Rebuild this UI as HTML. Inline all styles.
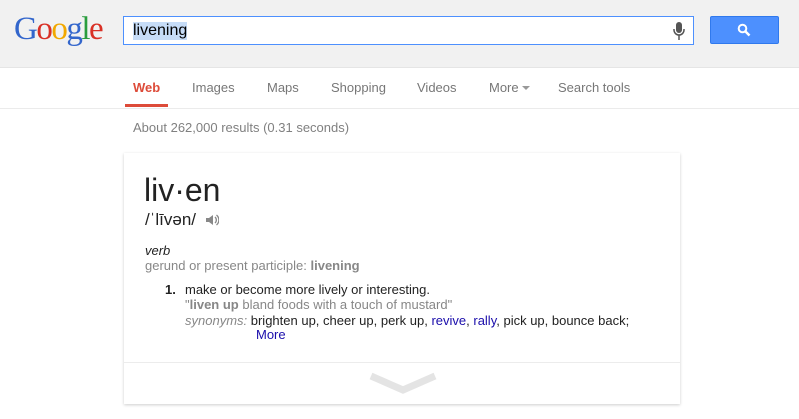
<!DOCTYPE html><html><head><style>
body{margin:0;width:799px;height:419px;overflow:hidden;background:#fff;font-family:"Liberation Sans",Arial,sans-serif;position:relative}
.a{position:absolute;white-space:nowrap}
</style></head><body>
<div class="a" style="left:0;top:0;width:799px;height:67px;background:#f1f1f1;border-bottom:1px solid #e5e5e5"></div>
<div class="a" style="left:14px;top:11px;font-family:'Liberation Serif',serif;font-size:33px;letter-spacing:-1.5px"><span style="color:#3366cc">G</span><span style="color:#d93025">o</span><span style="color:#f1a800">o</span><span style="color:#3366cc">g</span><span style="color:#2a9d3e">l</span><span style="color:#d93025">e</span></div>
<div class="a" style="left:123px;top:16px;width:569px;height:27px;background:#fff;border:1px solid #4d90fe;"></div>
<div class="a" style="left:133px;top:22px;font-size:16px;color:#000;background:#c6dcf7;line-height:18px">livening</div>
<svg class="a" style="left:672px;top:21px" width="14" height="20" viewBox="0 0 14 20"><rect x="4" y="1" width="6" height="11" rx="3" fill="#555"/><path d="M2 8v1a5 5 0 0 0 10 0V8" stroke="#555" stroke-width="1.5" fill="none"/><path d="M7 14v5" stroke="#555" stroke-width="1.5"/></svg>
<div class="a" style="left:710px;top:16px;width:69px;height:28px;background:#4d90fe;border:1px solid #3079ed;box-sizing:border-box;border-radius:2px"></div>
<svg class="a" style="left:737px;top:23px" width="14" height="14" viewBox="0 0 14 14"><circle cx="5.5" cy="5.5" r="3.8" stroke="#fff" stroke-width="2" fill="none"/><path d="M8.5 8.5l4 4" stroke="#fff" stroke-width="2.5"/></svg>
<div class="a" style="left:0;top:108px;width:799px;height:1px;background:#ebebeb"></div>
<div class="a" style="top:80px;left:133px;font-size:13px;color:#dd4b39;font-weight:bold">Web</div>
<div class="a" style="left:125px;top:104px;width:43px;height:3px;background:#dd4b39"></div>
<div class="a" style="top:80px;left:192px;font-size:13px;color:#777">Images</div>
<div class="a" style="top:80px;left:267px;font-size:13px;color:#777">Maps</div>
<div class="a" style="top:80px;left:331px;font-size:13px;color:#777">Shopping</div>
<div class="a" style="top:80px;left:417px;font-size:13px;color:#777">Videos</div>
<div class="a" style="top:80px;left:489px;font-size:13px;color:#777">More</div>
<div class="a" style="left:522px;top:86px;border-left:4px solid transparent;border-right:4px solid transparent;border-top:4px solid #999"></div>
<div class="a" style="top:80px;left:558px;font-size:13px;color:#777">Search tools</div>
<div class="a" style="top:120px;left:133px;font-size:13px;color:#808080">About 262,000 results (0.31 seconds)</div>
<div class="a" style="left:124px;top:153px;width:556px;height:251px;background:#fff;box-shadow:0 1px 3px rgba(0,0,0,.2);"></div>
<div class="a" style="left:124px;top:362px;width:556px;height:1px;background:#ececec"></div>
<svg class="a" style="left:369px;top:370px" width="68" height="26" viewBox="0 0 68 26"><path d="M2 6l32 14 32-14" stroke="#e4e4e4" stroke-width="7" fill="none"/></svg>
<div class="a" style="left:144px;top:172px;font-size:32px;color:#222">liv·en</div>
<div class="a" style="left:145px;top:210px;font-size:17px;color:#222">/ˈlīvən/</div>
<svg class="a" style="left:205px;top:213px" width="14" height="14" viewBox="0 0 14 14"><path d="M1 5h3l4-3v10l-4-3H1z" fill="#888"/><path d="M10 4a4 4 0 0 1 0 6M11.5 2a6.5 6.5 0 0 1 0 10" stroke="#888" stroke-width="1.3" fill="none"/></svg>
<div class="a" style="left:145px;top:243px;font-size:13px;color:#222;font-style:italic">verb</div>
<div class="a" style="left:145px;top:258px;font-size:13px;color:#878787">gerund or present participle: <b>livening</b></div>
<div class="a" style="left:165px;top:282px;font-size:13px;color:#222"><b>1.</b></div>
<div class="a" style="left:185px;top:282px;font-size:13px;color:#222">make or become more lively or interesting.</div>
<div class="a" style="left:185px;top:297px;font-size:13px;color:#878787">"<b>liven up</b> bland foods with a touch of mustard"</div>
<div class="a" style="left:185px;top:313px;font-size:13px;color:#222"><i style="color:#878787">synonyms:</i> brighten up, cheer up, perk up, <span style="color:#1a0dab">revive</span>, <span style="color:#1a0dab">rally</span>, pick up, bounce back;</div>
<div class="a" style="left:256px;top:327px;font-size:13px;color:#1a0dab">More</div>
</body></html>
